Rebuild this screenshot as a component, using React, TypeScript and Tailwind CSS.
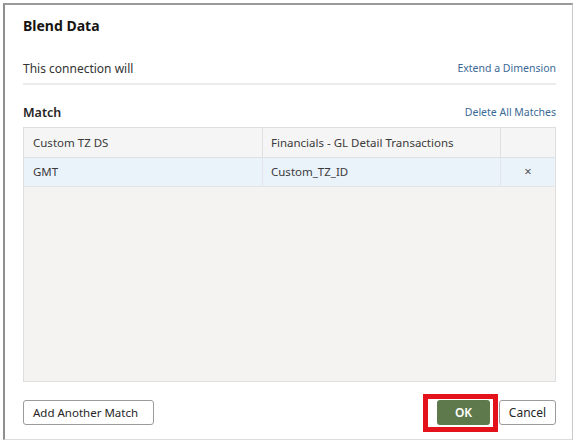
import React from "react";

export default function App() {
  const font = { fontFamily: '"Noto Sans", sans-serif' };
  return (
    <div className="w-[577px] h-[445px] bg-white pl-[3px] pt-[3px] pr-[4px] pb-[5px]" style={font}>
      <div className="relative h-full flex flex-col border-l-2 border-t-2 border-l-[#8f8f8f] border-t-[#9a9a9a] border-r border-b border-r-[#c9c9c9] border-b-[#dcdcdc] pl-[18px] pr-[16px] pt-[10px] text-[#333333]">
        <div className="h-[20px] flex items-center text-[14px] font-bold text-[#161513]">Blend Data</div>
        <div className="mt-[24px] h-[26px] pb-[4px] flex items-center justify-between border-b-2 border-[#ececec]">
          <span className="text-[12px]">This connection will</span>
          <span className="text-[10.5px] text-[#3b6a97]">Extend a Dimension</span>
        </div>
        <div className="mt-[18px] h-[20px] flex items-center justify-between">
          <span className="text-[12.5px] font-semibold text-[#262626]">Match</span>
          <span className="text-[10.5px] text-[#3b6a97]">Delete All Matches</span>
        </div>
        <div className="mt-[4px] h-[255px] border border-[#dedede] bg-[#f4f3f1] flex flex-col">
          <div className="grid grid-cols-[239px_238px_1fr] h-[30px] bg-[#f5f5f5] border-b border-[#e0e0e0] text-[11.5px] text-[#3a3a3a]">
            <div className="flex items-center pl-[9px] border-r border-[#e0e0e0]">Custom TZ DS</div>
            <div className="flex items-center pl-[8px] border-r border-[#e0e0e0]">Financials - GL Detail Transactions</div>
            <div />
          </div>
          <div className="grid grid-cols-[239px_238px_1fr] h-[29px] bg-[#eaf2fa] border-b border-[#e4e4e4] text-[11.5px] text-[#3a3a3a]">
            <div className="flex items-center pl-[9px] border-r border-[#e2e6ea]">GMT</div>
            <div className="flex items-center pl-[8px] border-r border-[#e2e6ea]">Custom_TZ_ID</div>
            <div className="flex items-center justify-center text-[13px] text-[#555]">×</div>
          </div>
        </div>
        <div className="mt-[18px] flex items-center justify-between">
          <button className="h-[25px] w-[131px] pl-[9px] text-left border border-[#9b9b9b] rounded-[3px] bg-white text-[11.5px] text-[#262626]">Add Another Match</button>
          <div className="flex items-center gap-[9px]">
            <button className="h-[25px] w-[53px] rounded-[3px] bg-[#5e7a4c] text-white text-[12px] font-semibold">OK</button>
            <button className="h-[25px] w-[57px] border border-[#9b9b9b] rounded-[3px] bg-white text-[12px] text-[#262626]">Cancel</button>
          </div>
        </div>
        <div className="absolute left-[418px] top-[389px] w-[75px] h-[38px] border-[5px] border-[#e3121b] pointer-events-none" />
      </div>
    </div>
  );
}
